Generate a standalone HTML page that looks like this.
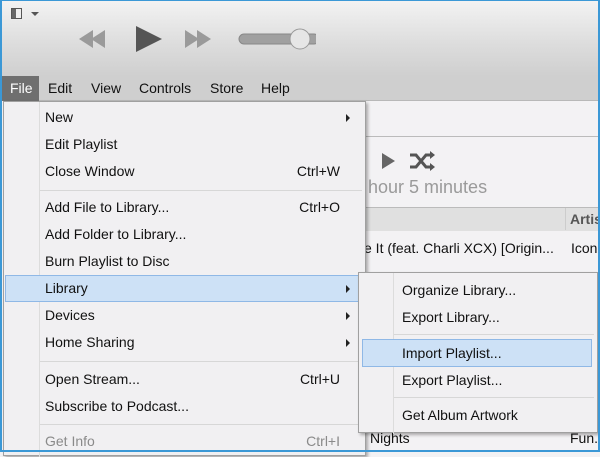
<!DOCTYPE html>
<html><head><style>
*{margin:0;padding:0;box-sizing:border-box}
body{width:600px;height:452px;overflow:hidden;position:relative;background:#f3f2f4;font-family:"Liberation Sans",sans-serif;font-size:14px;color:#111}
.a{position:absolute;white-space:nowrap}
.tb{left:0;top:0;width:600px;height:76px;background:linear-gradient(#f3f3f3,#dcdcdc 60%,#cfcfcf)}
.mb{left:0;top:76px;width:600px;height:25px;background:#cfcfcf;border-bottom:1px solid #b8b8b8}
.mb span{position:absolute;top:4px}
.menu{background:#f1f0f2;border:1px solid #a0a0a0;box-shadow:2px 2px 3px rgba(0,0,0,.3)}
.it{position:absolute;left:41px}
.sc{position:absolute;right:25px}
.arr{position:absolute;width:0;height:0;border-top:4px solid transparent;border-bottom:4px solid transparent;border-left:4px solid #222}
.sep{position:absolute;height:1px;background:#d7d7d7}
.hl{position:absolute;background:#cde1f6;border:1px solid #8fb8e6}
</style></head><body>
<div class="a tb"></div>
<div class="a" style="left:11px;top:8px;width:11px;height:11px;border:1px solid #555;background:linear-gradient(90deg,#666 45%,#eee 45%)"></div>
<div class="a" style="left:31px;top:12px;border-left:4px solid transparent;border-right:4px solid transparent;border-top:4px solid #555"></div>
<svg class="a" style="left:76px;top:24px" width="240" height="30">
<path d="M3 15 L17 6 L17 24Z M15 15 L29 6 L29 24Z" fill="#9a9a9a"/>
<path d="M60 2 L86 15 L60 28Z" fill="#555"/>
<path d="M109 6 L123 15 L109 24Z M121 6 L135 15 L121 24Z" fill="#9a9a9a"/>
<rect x="163" y="10" width="80" height="10" rx="5" fill="#a0a0a0" stroke="#888"/>
<circle cx="224" cy="15" r="10" fill="#e6e6e6" stroke="#999"/>
</svg>
<div class="a mb">
<div class="a" style="left:2px;top:0;width:37px;height:25px;background:#6f6f6f"></div>
<span style="left:10px;color:#fff">File</span>
<span style="left:48px">Edit</span>
<span style="left:91px">View</span>
<span style="left:139px">Controls</span>
<span style="left:210px">Store</span>
<span style="left:261px">Help</span>
</div>
<div class="a" style="left:365px;top:101px;width:235px;height:36px;background:#f3f2f4;border-bottom:1px solid #bbb"></div>
<svg class="a" style="left:380px;top:150px" width="60" height="22"><path d="M2 3 L15 11 L2 19Z" fill="#666"/><path d="M30 5 h6 l10 12 h6 M30 17 h6 l10 -12 h6" stroke="#555" stroke-width="3" fill="none"/><path d="M50 1 l5 4 l-5 4Z M50 13 l5 4 l-5 4Z" fill="#555"/></svg>
<div class="a" style="left:368px;top:177px;font-size:18px;color:#9a9a9a">hour 5 minutes</div>
<div class="a" style="left:365px;top:207px;width:235px;height:24px;background:#e0e0e0;border-top:1px solid #bbb"></div>
<div class="a" style="left:565px;top:208px;width:1px;height:22px;background:#ccc"></div>
<div class="a" style="left:570px;top:211px;font-weight:bold;color:#555">Artis</div>
<div class="a" style="left:364px;top:240px">e It (feat. Charli XCX) [Origin...</div>
<div class="a" style="left:571px;top:240px">Icon</div>
<div class="a" style="left:370px;top:430px">Nights</div>
<div class="a" style="left:570px;top:430px">Fun.</div>
<div class="a menu" style="left:3px;top:101px;width:363px;height:355px">
<div class="a" style="left:35px;top:0;width:1px;height:355px;background:#dcdcdc"></div>
<div class="hl" style="left:1px;top:173px;width:354px;height:27px"></div>
<div class="it" style="top:7px">New</div><div class="arr" style="left:342px;top:12px"></div>
<div class="it" style="top:34px">Edit Playlist</div>
<div class="it" style="top:61px">Close Window</div><div class="sc" style="top:61px">Ctrl+W</div>
<div class="sep" style="left:36px;top:88px;width:322px"></div>
<div class="it" style="top:97px">Add File to Library...</div><div class="sc" style="top:97px">Ctrl+O</div>
<div class="it" style="top:124px">Add Folder to Library...</div>
<div class="it" style="top:151px">Burn Playlist to Disc</div>
<div class="it" style="top:178px">Library</div><div class="arr" style="left:342px;top:183px"></div>
<div class="it" style="top:205px">Devices</div><div class="arr" style="left:342px;top:210px"></div>
<div class="it" style="top:232px">Home Sharing</div><div class="arr" style="left:342px;top:237px"></div>
<div class="sep" style="left:36px;top:259px;width:322px"></div>
<div class="it" style="top:269px">Open Stream...</div><div class="sc" style="top:269px">Ctrl+U</div>
<div class="it" style="top:296px">Subscribe to Podcast...</div>
<div class="sep" style="left:36px;top:322px;width:322px"></div>
<div class="it" style="top:331px;color:#8a8a8a">Get Info</div><div class="sc" style="top:331px;color:#8a8a8a">Ctrl+I</div>
</div>
<div class="a menu" style="left:358px;top:272px;width:240px;height:161px">
<div class="a" style="left:34px;top:0;width:1px;height:161px;background:#dcdcdc"></div>
<div class="hl" style="left:3px;top:66px;width:230px;height:28px"></div>
<div class="it" style="top:9px;left:43px">Organize Library...</div>
<div class="it" style="top:36px;left:43px">Export Library...</div>
<div class="sep" style="left:35px;top:61px;width:200px"></div>
<div class="it" style="top:72px;left:43px">Import Playlist...</div>
<div class="it" style="top:99px;left:43px">Export Playlist...</div>
<div class="sep" style="left:35px;top:124px;width:200px"></div>
<div class="it" style="top:134px;left:43px">Get Album Artwork</div>
</div>
<div class="a" style="left:0;top:0;width:600px;height:452px;border:2px solid #3b98d6;border-top-width:1px"></div>
</body></html>
